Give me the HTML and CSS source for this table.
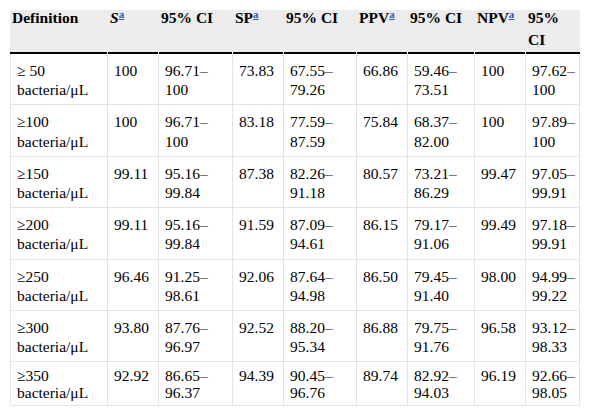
FILE: index.html
```html
<!DOCTYPE html>
<html>
<head>
<meta charset="utf-8">
<link rel="stylesheet" href="styles.css">
</head>
<body>
<table class="tbl">
  <colgroup>
    <col class="c1"><col class="c2"><col class="c3"><col class="c4"><col class="c5"><col class="c6"><col class="c7"><col class="c8"><col class="c9">
  </colgroup>
  <thead>
    <tr>
      <th><div class="hd">Definition</div></th>
      <th><div class="hd"><i>S</i><sup><a href="#" class="ref">a</a></sup></div></th>
      <th><div class="hd">95% CI</div></th>
      <th><div class="hd">SP<sup><a href="#" class="ref">a</a></sup></div></th>
      <th><div class="hd">95% CI</div></th>
      <th><div class="hd">PPV<sup><a href="#" class="ref">a</a></sup></div></th>
      <th><div class="hd">95% CI</div></th>
      <th><div class="hd">NPV<sup><a href="#" class="ref">a</a></sup></div></th>
      <th class="last"><div class="hd">95% CI</div></th>
    </tr>
  </thead>
  <tbody>
    <tr>
      <td>≥ 50 <span class="nw">bacteria/μL</span></td><td>100</td><td>96.71–100</td><td>73.83</td><td>67.55–79.26</td><td>66.86</td><td>59.46–73.51</td><td>100</td><td>97.62–100</td>
    </tr>
    <tr>
      <td>≥100 <span class="nw">bacteria/μL</span></td><td>100</td><td>96.71–100</td><td>83.18</td><td>77.59–87.59</td><td>75.84</td><td>68.37–82.00</td><td>100</td><td>97.89–100</td>
    </tr>
    <tr>
      <td>≥150 <span class="nw">bacteria/μL</span></td><td>99.11</td><td>95.16–99.84</td><td>87.38</td><td>82.26–91.18</td><td>80.57</td><td>73.21–86.29</td><td>99.47</td><td>97.05–99.91</td>
    </tr>
    <tr>
      <td>≥200 <span class="nw">bacteria/μL</span></td><td>99.11</td><td>95.16–99.84</td><td>91.59</td><td>87.09–94.61</td><td>86.15</td><td>79.17–91.06</td><td>99.49</td><td>97.18–99.91</td>
    </tr>
    <tr>
      <td>≥250 <span class="nw">bacteria/μL</span></td><td>96.46</td><td>91.25–98.61</td><td>92.06</td><td>87.64–94.98</td><td>86.50</td><td>79.45–91.40</td><td>98.00</td><td>94.99–99.22</td>
    </tr>
    <tr>
      <td>≥300 <span class="nw">bacteria/μL</span></td><td>93.80</td><td>87.76–96.97</td><td>92.52</td><td>88.20–95.34</td><td>86.88</td><td>79.75–91.76</td><td>96.58</td><td>93.12–98.33</td>
    </tr>
    <tr class="lastrow">
      <td>≥350 <span class="nw">bacteria/μL</span></td><td>92.92</td><td>86.65–96.37</td><td>94.39</td><td>90.45–96.76</td><td>89.74</td><td>82.92–94.03</td><td>96.19</td><td>92.66–98.05</td>
    </tr>
  </tbody>
</table>
</body>
</html>
```

FILE: styles.css
```css
html, body {
  margin: 0;
  padding: 0;
  background: #fff;
}
body {
  padding: 10px;
  font-family: "Liberation Serif", "Times New Roman", serif;
  font-size: 15.5px;
  color: #000;
}
.tbl {
  border-collapse: separate;
  border-spacing: 0;
  table-layout: fixed;
  width: 570px;
}
.c1 { width: 98px; }
.c2 { width: 51px; }
.c3 { width: 74px; }
.c4 { width: 51px; }
.c5 { width: 73px; }
.c6 { width: 51px; }
.c7 { width: 67px; }
.c8 { width: 51px; }
.c9 { width: 54px; }

.tbl th {
  text-align: left;
  vertical-align: top;
  font-weight: bold;
  padding: 0 4px 3px 2px;
  line-height: 22px;
  background:
    linear-gradient(#000, #000) left bottom / calc(100% - 1px) 2px no-repeat,
    linear-gradient(#fff, #fff) left bottom / 100% 2px no-repeat,
    #ececec;
}
.tbl th.last {
  background:
    linear-gradient(#000, #000) left bottom / 100% 2px no-repeat,
    #ececec;
}
.hd {
  margin-top: -3px;
}
.tbl sup {
  font-size: 11px;
  line-height: 1;
  vertical-align: 5px;
}
.ref {
  color: #2a5db0;
  font-weight: bold;
  text-decoration: underline;
  text-decoration-thickness: 1px;
  text-underline-offset: 1px;
}
.nw {
  white-space: nowrap;
}
.tbl td {
  vertical-align: top;
  text-align: left;
  padding: 7px 4px 5px 6px;
  line-height: 19.2px;
  border-right: 1px solid #e4e4e4;
  border-bottom: 1px solid #e4e4e4;
}
.tbl td:first-child {
  border-left: 1px solid #e4e4e4;
}
.tbl tr.lastrow td {
  padding-top: 5px;
  padding-bottom: 4px;
  line-height: 17px;
}
```
